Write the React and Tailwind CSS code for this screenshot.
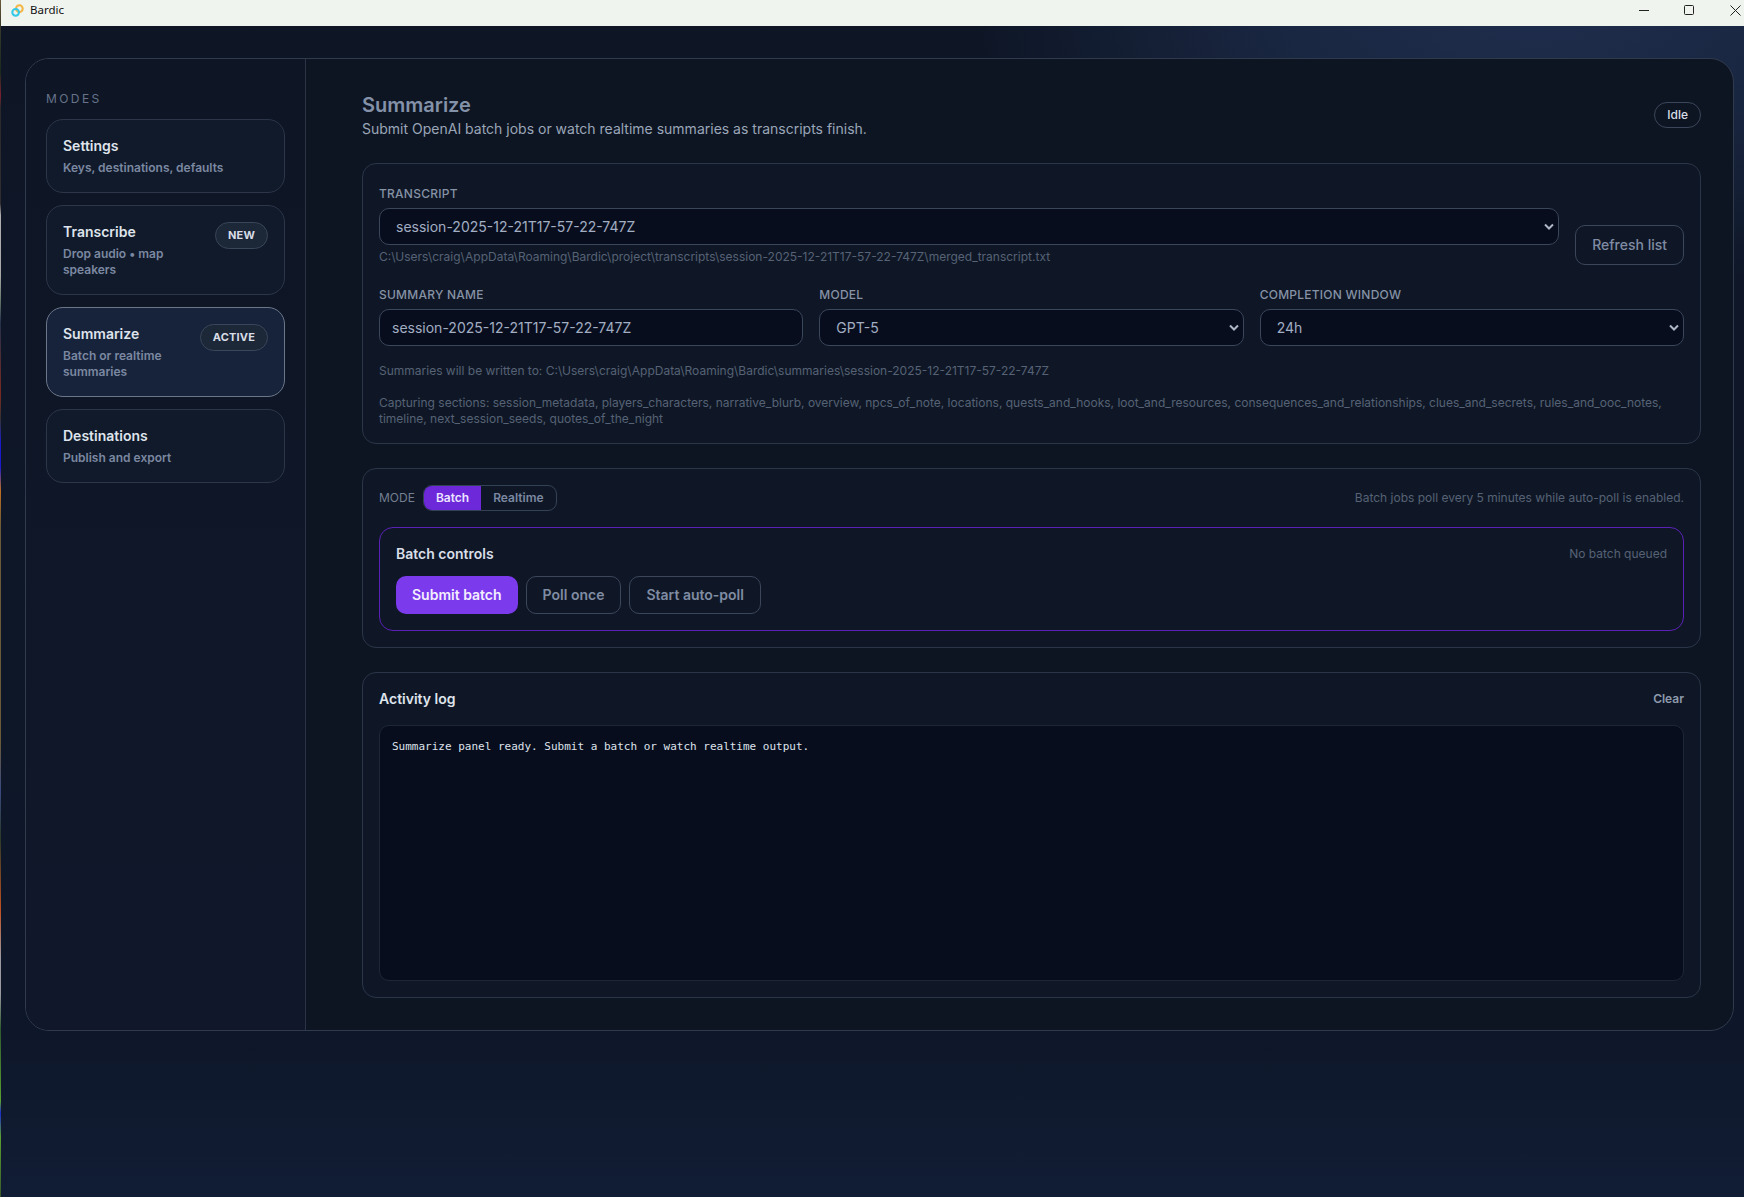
import React from "react";

const cardBase = "flex items-start justify-between gap-3 rounded-[17px] border p-4";
const label = "block text-xs leading-4 font-medium tracking-[0.02em] uppercase text-[#8692a5]";
const field = "h-[37px] w-full rounded-[10px] border border-[#3a4659] bg-[#080d1e] text-sm text-[#a2aec2] outline-none";
const ghostBtn = "h-[38px] rounded-[10px] border border-[#3a4659] px-4 text-sm font-semibold text-[#7f8ca3]";
const panel = "rounded-[14px] border border-[#2a3648] bg-[#0f1726]";

function Chevron() {
  return (
    <svg className="pointer-events-none absolute right-[5px] top-[15px]" width="10" height="8" viewBox="0 0 10 8" fill="none">
      <path d="M1 1.5 L5 5.5 L9 1.5" stroke="#aeb7c5" strokeWidth="2" />
    </svg>
  );
}

function SelectField({ value }) {
  return (
    <div className="relative">
      <select className={`${field} appearance-none pl-4 pr-6`} defaultValue={value}>
        <option>{value}</option>
      </select>
      <Chevron />
    </div>
  );
}

function ModeCard({ title, sub, badge, active }) {
  return (
    <div className={`${cardBase} ${active ? "border-[#6b7789] bg-[#17233b]" : "border-[#2c3648] bg-[#111a2a]"}`}>
      <div className="min-w-0 flex-1">
        <div className="text-sm leading-5 font-semibold text-[#dfe4ec]">{title}</div>
        <div className="mt-1 text-xs leading-4 font-semibold text-[#7b88a1]">{sub}</div>
      </div>
      {badge && (
        <span className="flex h-[27px] shrink-0 items-center rounded-full border border-[#3a4659] bg-[#1c2738] px-3 text-[11px] font-bold tracking-[0.015em] text-[#d8dde6]">
          {badge}
        </span>
      )}
    </div>
  );
}

export default function App() {
  return (
    <div className="flex min-h-screen font-[Inter,sans-serif]">
      <div className="w-px shrink-0 bg-[linear-gradient(180deg,#6b5a3c_0%,#3a3a2c_2%,#1a2a20_6%,#7a2030_8%,#2a2a2a_9%,#2f2f33_17%,#b0b0b0_18%,#a8a8a8_23%,#6a7a6a_25%,#24304a_27%,#7a2a20_33%,#333_35%,#1a1acc_37%,#1a1acc_39%,#c07020_41%,#6a5a38_44%,#6a5a38_62%,#3a4a80_66%,#2a3a2a_70%,#c05020_76%,#9a9aa0_80%,#9a9aa0_83%,#2f5a2f_86%,#5aa030_92%,#1a2acc_93%,#5aa030_95%,#3a5a2a_100%)]" />
      <div className="flex min-w-0 flex-1 flex-col bg-[radial-gradient(ellipse_560px_300px_at_88%_0%,#1f2d4d_0%,#1a2742_45%,transparent_100%),linear-gradient(180deg,#0e1626_0%,#0e1729_86%,#111d35_100%)]">
        <div className="flex h-[26px] shrink-0 items-center bg-[#f0f4ee] pb-[6px]">
          <svg className="ml-[10px]" width="13" height="15" viewBox="0 0 14 16" fill="none">
            <circle cx="9" cy="6" r="3.6" stroke="#f2b544" strokeWidth="2.2" />
            <circle cx="5" cy="10" r="3.6" stroke="#35c9e8" strokeWidth="2.2" />
          </svg>
          <span className="ml-[6px] font-['Noto_Sans',sans-serif] text-[11.5px] text-[#111]">Bardic</span>
          <div className="ml-auto flex items-center">
            <svg width="10" height="10" viewBox="0 0 10 10" className="mr-[35px]">
              <path d="M0 5.5 H10" stroke="#222" strokeWidth="1" />
            </svg>
            <svg width="10" height="10" viewBox="0 0 10 10" className="mr-[36px]">
              <rect x="0.5" y="0.5" width="9" height="9" rx="1" fill="none" stroke="#222" strokeWidth="1" />
            </svg>
            <svg width="11" height="11" viewBox="0 0 11 11" className="mr-[3px]">
              <path d="M0.5 0.5 L10.5 10.5 M10.5 0.5 L0.5 10.5" stroke="#222" strokeWidth="1" />
            </svg>
          </div>
        </div>

        <div className="ml-6 mt-8 flex w-[1709px] overflow-hidden rounded-3xl border border-[#2f3a4c] bg-[#0e1522]">
          <aside className="w-[280px] shrink-0 border-r border-[#2a3444] bg-[linear-gradient(180deg,#0e1625_0%,#10172a_100%)] px-5 pt-8">
            <div className="text-xs leading-4 tracking-[0.2em] text-[#66738a]">MODES</div>
            <div className="mt-3 flex flex-col gap-3">
              <ModeCard title="Settings" sub="Keys, destinations, defaults" />
              <ModeCard title="Transcribe" sub="Drop audio • map speakers" badge="NEW" />
              <ModeCard title="Summarize" sub="Batch or realtime summaries" badge="ACTIVE" active />
              <ModeCard title="Destinations" sub="Publish and export" />
            </div>
          </aside>

          <main className="flex min-w-0 flex-1 flex-col gap-6 pb-8 pl-14 pr-8 pt-8">
            <header className="flex items-center justify-between">
              <div>
                <h1 className="text-xl leading-7 font-semibold text-[#8492a9]">Summarize</h1>
                <p className="text-sm leading-5 text-[#9aa6b8]">
                  Submit OpenAI batch jobs or watch realtime summaries as transcripts finish.
                </p>
              </div>
              <span className="flex h-[26px] items-center rounded-full border border-[#3a4659] px-3 text-xs font-medium text-[#d8dde6]">
                Idle
              </span>
            </header>

            <section className={`${panel} px-4 pb-4 pt-[22px]`}>
              <div className="flex items-end gap-4">
                <div className="min-w-0 flex-1">
                  <label className={label}>Transcript</label>
                  <div className="mt-[6px]">
                    <SelectField value="session-2025-12-21T17-57-22-747Z" />
                  </div>
                  <div className="mt-1 text-xs leading-4 text-[#566275]">
                    C:\Users\craig\AppData\Roaming\Bardic\project\transcripts\session-2025-12-21T17-57-22-747Z\merged_transcript.txt
                  </div>
                </div>
                <button className="h-10 rounded-[10px] border border-[#3a4659] px-4 text-sm font-medium text-[#7f8ca3]">
                  Refresh list
                </button>
              </div>

              <div className="mt-[22px] grid grid-cols-3 gap-4">
                <div>
                  <label className={label}>Summary name</label>
                  <input
                    className={`${field} mt-[6px] px-3`}
                    defaultValue="session-2025-12-21T17-57-22-747Z"
                  />
                </div>
                <div>
                  <label className={label}>Model</label>
                  <div className="mt-[6px]">
                    <SelectField value="GPT-5" />
                  </div>
                </div>
                <div>
                  <label className={label}>Completion window</label>
                  <div className="mt-[6px]">
                    <SelectField value="24h" />
                  </div>
                </div>
              </div>

              <p className="mt-[17px] text-xs leading-4 text-[#566275]">
                Summaries will be written to: C:\Users\craig\AppData\Roaming\Bardic\summaries\session-2025-12-21T17-57-22-747Z
              </p>
              <p className="mt-4 text-xs leading-4 text-[#566275]">
                Capturing sections: session_metadata, players_characters, narrative_blurb, overview, npcs_of_note, locations, quests_and_hooks, loot_and_resources, consequences_and_relationships, clues_and_secrets, rules_and_ooc_notes, timeline, next_session_seeds, quotes_of_the_night
              </p>
            </section>

            <section className={`${panel} p-4`}>
              <div className="flex items-center justify-between">
                <div className="flex items-center gap-2">
                  <span className="text-xs text-[#737f91]">MODE</span>
                  <div className="flex h-[26px] overflow-hidden rounded-[9px] border border-[#334155]">
                    <button className="bg-[#6d28d9] px-3 text-xs font-semibold text-[#ece4ff]">Batch</button>
                    <button className="px-3 text-xs font-semibold text-[#7b88a1]">Realtime</button>
                  </div>
                </div>
                <span className="text-xs text-[#566275]">Batch jobs poll every 5 minutes while auto-poll is enabled.</span>
              </div>

              <div className="mt-4 rounded-[14px] border border-[#5b21b6] p-4">
                <div className="flex items-center justify-between">
                  <span className="text-sm leading-5 font-semibold text-[#d9dfe8]">Batch controls</span>
                  <span className="text-xs text-[#566275]">No batch queued</span>
                </div>
                <div className="mt-3 flex gap-2">
                  <button className="h-[38px] rounded-[10px] bg-[#7c3aed] px-4 text-sm font-semibold text-[#f3eeff]">
                    Submit batch
                  </button>
                  <button className={ghostBtn}>Poll once</button>
                  <button className={ghostBtn}>Start auto-poll</button>
                </div>
              </div>
            </section>

            <section className={`${panel} p-4`}>
              <div className="flex items-center justify-between">
                <span className="text-sm leading-5 font-semibold text-[#dfe4ec]">Activity log</span>
                <button className="text-xs font-semibold text-[#8e9aac]">Clear</button>
              </div>
              <div className="mt-4 h-[256px] rounded-[10px] border border-[#1e2738] bg-[#080d1e] px-3 pb-3 pt-[13px] font-['DejaVu_Sans_Mono',monospace] text-[11px] leading-4 text-[#dde2ea]">
                Summarize panel ready. Submit a batch or watch realtime output.
              </div>
            </section>
          </main>
        </div>
      </div>
    </div>
  );
}
